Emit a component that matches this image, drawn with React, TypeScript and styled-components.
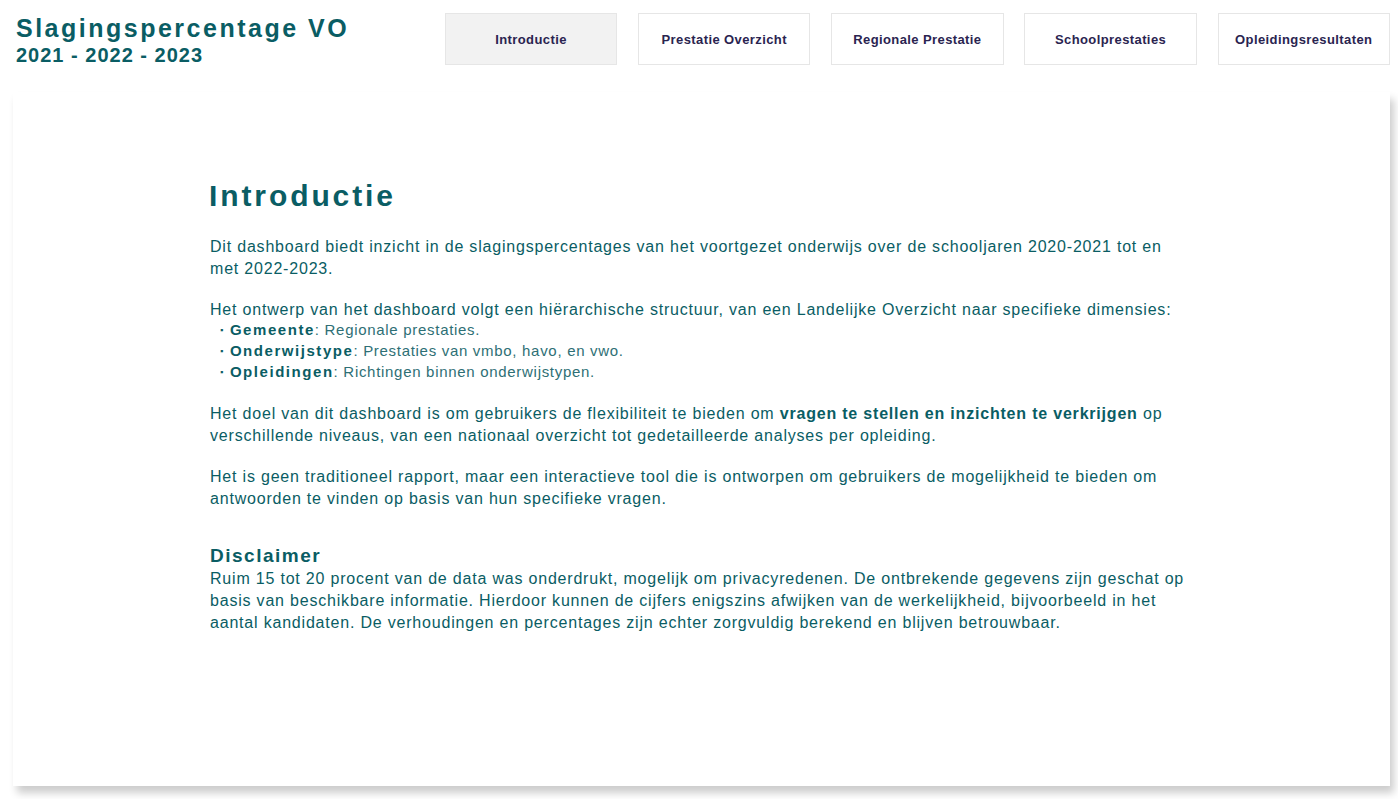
import styled, { createGlobalStyle } from "styled-components";

const GlobalStyle = createGlobalStyle`
	body {
		margin: 0;
		background: #ffffff;
		font-family: "Liberation Sans", Arial, sans-serif;
	}
`;

const tabs = ["Introductie", "Prestatie Overzicht", "Regionale Prestatie", "Schoolprestaties", "Opleidingsresultaten"];

interface TabProps {
	active?: boolean;
}

function App() {
	return (
		<>
			<GlobalStyle />
			<Page>
				<Header>
					<TitleBlock>
						<Title>Slagingspercentage VO</Title>
						<Years>2021 - 2022 - 2023</Years>
					</TitleBlock>
					<Nav>
						{tabs.map((t, idx) => (
							<Tab key={t} active={idx === 0}>
								{t}
							</Tab>
						))}
					</Nav>
				</Header>
				<Card>
					<Content>
						<Heading>Introductie</Heading>
						<Paragraph>
							Dit dashboard biedt inzicht in de slagingspercentages van het voortgezet onderwijs over de schooljaren 2020-2021 tot en
							met 2022-2023.
						</Paragraph>
						<Paragraph>
							Het ontwerp van het dashboard volgt een hiërarchische structuur, van een Landelijke Overzicht naar specifieke dimensies:
						</Paragraph>
						<List>
							<Item>
								<b>Gemeente</b>: Regionale prestaties.
							</Item>
							<Item>
								<b>Onderwijstype</b>: Prestaties van vmbo, havo, en vwo.
							</Item>
							<Item>
								<b>Opleidingen</b>: Richtingen binnen onderwijstypen.
							</Item>
						</List>
						<Paragraph>
							Het doel van dit dashboard is om gebruikers de flexibiliteit te bieden om <b>vragen te stellen en inzichten te verkrijgen</b> op
							verschillende niveaus, van een nationaal overzicht tot gedetailleerde analyses per opleiding.
						</Paragraph>
						<Paragraph>
							Het is geen traditioneel rapport, maar een interactieve tool die is ontworpen om gebruikers de mogelijkheid te bieden om
							antwoorden te vinden op basis van hun specifieke vragen.
						</Paragraph>
						<SubHeading>Disclaimer</SubHeading>
						<Disclaimer>
							Ruim 15 tot 20 procent van de data was onderdrukt, mogelijk om privacyredenen. De ontbrekende gegevens zijn geschat op
							basis van beschikbare informatie. Hierdoor kunnen de cijfers enigszins afwijken van de werkelijkheid, bijvoorbeeld in het
							aantal kandidaten. De verhoudingen en percentages zijn echter zorgvuldig berekend en blijven betrouwbaar.
						</Disclaimer>
					</Content>
				</Card>
			</Page>
		</>
	);
}

export default App;

const Page = styled.div`
	width: 1398px;
	height: 799px;
	overflow: hidden;
	color: #0a5d64;
`;

const Header = styled.header`
	display: flex;
	justify-content: space-between;
	align-items: flex-start;
	padding: 13px 8px 0 16px;
	height: 79px;
	box-sizing: border-box;
`;

const TitleBlock = styled.div`
	display: flex;
	flex-direction: column;
	padding-top: 1px;
`;

const Title = styled.h1`
	margin: 0;
	font-size: 25px;
	line-height: 28px;
	font-weight: 700;
	letter-spacing: 2.5px;
`;

const Years = styled.div`
	font-size: 20px;
	line-height: 26px;
	font-weight: 700;
	letter-spacing: 1px;
`;

const Nav = styled.nav`
	display: flex;
	gap: 20.7px;
`;

const Tab = styled.button<TabProps>`
	width: 172.5px;
	height: 52px;
	box-sizing: border-box;
	border: 1px solid #e6e6e6;
	background: ${({ active }) => (active ? "#f2f2f2" : "#ffffff")};
	color: #2a2450;
	font-family: "Liberation Sans", Arial, sans-serif;
	font-size: 13px;
	font-weight: 700;
	letter-spacing: 0.4px;
	cursor: pointer;
	padding: 0;
`;

const Card = styled.main`
	margin: 13px 8px 0 13px;
	height: 694px;
	background: #ffffff;
	box-shadow: 4px 7px 8px rgba(0, 0, 0, 0.2);
	padding: 86px 0 0 197px;
	box-sizing: border-box;
`;

const Content = styled.div`
	width: 985px;
	letter-spacing: 0.8px;
`;

const Heading = styled.h2`
	margin: 0 0 22px -1px;
	font-size: 30px;
	line-height: 36px;
	font-weight: 700;
	letter-spacing: 2.9px;
`;

const Paragraph = styled.p`
	margin: 0 0 19px;
	font-size: 16px;
	line-height: 22px;
`;

const List = styled.ul`
	margin: -21px 0 21px;
	padding: 0 0 0 10px;
	list-style: none;
	letter-spacing: 0.7px;
`;

const Item = styled.li`
	font-size: 15px;
	line-height: 21px;
	color: #2e6f75;
	&::before {
		content: "▪";
		display: inline-block;
		font-size: 9px;
		line-height: 9px;
		margin-right: 6px;
		color: #0a5d64;
		vertical-align: 2px;
	}
	b {
		color: #0a5d64;
		letter-spacing: 1.55px;
	}
`;

const SubHeading = styled.h3`
	margin: 34px 0 0;
	font-size: 19px;
	line-height: 24px;
	font-weight: 700;
	letter-spacing: 1.5px;
`;

const Disclaimer = styled.p`
	margin: 0;
	font-size: 16px;
	line-height: 22px;
`;
